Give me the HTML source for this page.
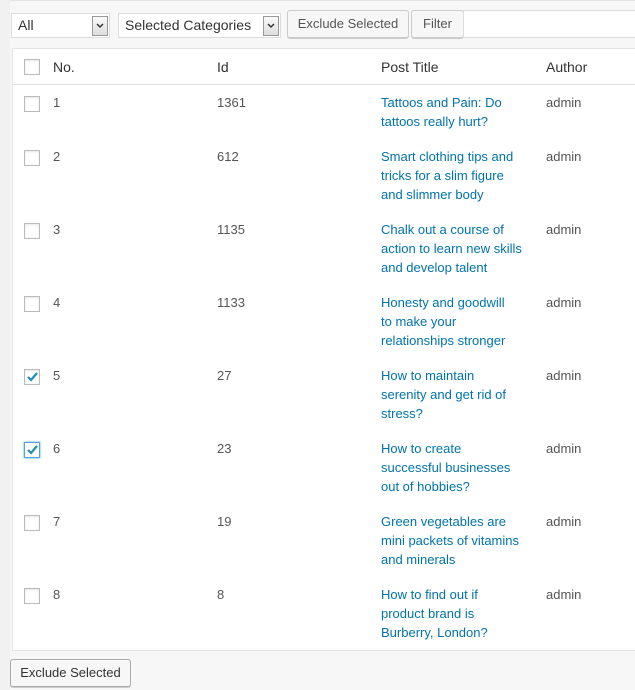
<!DOCTYPE html>
<html><head><meta charset="utf-8"><style>
body{margin:0;width:635px;height:690px;background:#f1f1f1;font-family:"Liberation Sans",sans-serif;font-size:13px;color:#555;position:relative;overflow:hidden}
.wrap{position:absolute;left:10px;top:0;right:0;bottom:0;background:#f7f7f7;border-top:1px solid #e5e5e5}
.sel{position:absolute;top:13px;height:23px;background:#fff;border:1px solid #ddd;font-size:14px;color:#333;line-height:23px;padding-left:6px;box-sizing:content-box}
.arr{position:absolute;right:1px;top:2px;width:14px;height:18px;border:1px solid #999;background:linear-gradient(#fafafa,#ddd);text-align:center}
.btn{position:absolute;height:26px;border:1px solid #ccc;border-radius:3px;background:#f7f7f7;color:#555;font-size:13px;line-height:26px;text-align:center;box-shadow:0 1px 0 #ccc}
.tbl{position:absolute;left:12px;top:48px;width:640px;height:601px;background:#fff;border:1px solid #e5e5e5}
.row{position:absolute;left:0;width:640px}
.cb{position:absolute;left:11px;width:14px;height:14px;border:1px solid #bbb;background:#fff;box-shadow:inset 0 1px 2px rgba(0,0,0,.1)}
.c{position:absolute;line-height:19px}
a{color:#0073aa;text-decoration:none}
</style></head><body>
<div class="wrap"></div>
<div class="sel" style="left:11px;width:91px">All<div class="arr"><svg width="14" height="18"><path d="M4 7l3 3 3-3" stroke="#333" stroke-width="1.5" fill="none"/></svg></div></div>
<div class="sel" style="left:118px;width:155px">Selected Categories<div class="arr"><svg width="14" height="18"><path d="M4 7l3 3 3-3" stroke="#333" stroke-width="1.5" fill="none"/></svg></div></div>
<div class="btn" style="left:287px;top:10px;width:120px">Exclude Selected</div>
<div class="btn" style="left:411px;top:10px;width:51px">Filter</div>
<div style="position:absolute;left:463px;top:10px;width:180px;height:26px;background:#fff;border:1px solid #ddd"></div>
<div class="tbl">
<div style="position:absolute;left:0;top:35px;width:640px;border-top:1px solid #e1e1e1"></div>
<div class="cb" style="top:10px"></div>
<div class="c" style="left:40px;top:9px;font-size:14px;color:#333">No.</div>
<div class="c" style="left:204px;top:9px;font-size:14px;color:#333">Id</div>
<div class="c" style="left:368px;top:9px;font-size:14px;color:#333">Post Title</div>
<div class="c" style="left:533px;top:9px;font-size:14px;color:#333">Author</div>

<div class="row" style="top:44px"><div class="cb" style="top:3px"></div><div class="c" style="left:40px">1</div><div class="c" style="left:204px">1361</div><div class="c" style="left:368px;width:128px"><a>Tattoos and Pain: Do tattoos really hurt?</a></div><div class="c" style="left:533px">admin</div></div>
<div class="row" style="top:98px"><div class="cb" style="top:3px"></div><div class="c" style="left:40px">2</div><div class="c" style="left:204px">612</div><div class="c" style="left:368px;width:142px"><a>Smart clothing tips and tricks for a slim figure and slimmer body</a></div><div class="c" style="left:533px">admin</div></div>
<div class="row" style="top:171px"><div class="cb" style="top:3px"></div><div class="c" style="left:40px">3</div><div class="c" style="left:204px">1135</div><div class="c" style="left:368px;width:148px"><a>Chalk out a course of action to learn new skills and develop talent</a></div><div class="c" style="left:533px">admin</div></div>
<div class="row" style="top:244px"><div class="cb" style="top:3px"></div><div class="c" style="left:40px">4</div><div class="c" style="left:204px">1133</div><div class="c" style="left:368px;width:133px"><a>Honesty and goodwill to make your relationships stronger</a></div><div class="c" style="left:533px">admin</div></div>
<div class="row" style="top:317px"><div class="cb" style="top:3px"><svg width="14" height="14"><path d="M3 7l3 3 6-7" stroke="#1e8cbe" stroke-width="2.2" fill="none"/></svg></div><div class="c" style="left:40px">5</div><div class="c" style="left:204px">27</div><div class="c" style="left:368px;width:140px"><a>How to maintain serenity and get rid of stress?</a></div><div class="c" style="left:533px">admin</div></div>
<div class="row" style="top:390px"><div class="cb" style="top:3px;border-color:#5b9dd9;box-shadow:0 0 2px rgba(30,140,190,.8)"><svg width="14" height="14"><path d="M3 7l3 3 6-7" stroke="#1e8cbe" stroke-width="2.2" fill="none"/></svg></div><div class="c" style="left:40px">6</div><div class="c" style="left:204px">23</div><div class="c" style="left:368px;width:140px"><a>How to create successful businesses out of hobbies?</a></div><div class="c" style="left:533px">admin</div></div>
<div class="row" style="top:463px"><div class="cb" style="top:3px"></div><div class="c" style="left:40px">7</div><div class="c" style="left:204px">19</div><div class="c" style="left:368px;width:150px"><a>Green vegetables are mini packets of vitamins and minerals</a></div><div class="c" style="left:533px">admin</div></div>
<div class="row" style="top:536px"><div class="cb" style="top:3px"></div><div class="c" style="left:40px">8</div><div class="c" style="left:204px">8</div><div class="c" style="left:368px;width:130px"><a>How to find out if product brand is Burberry, London?</a></div><div class="c" style="left:533px">admin</div></div>
</div>
<div class="btn" style="left:10px;top:659px;width:119px;border-color:#aaa;color:#333">Exclude Selected</div>
</body></html>
